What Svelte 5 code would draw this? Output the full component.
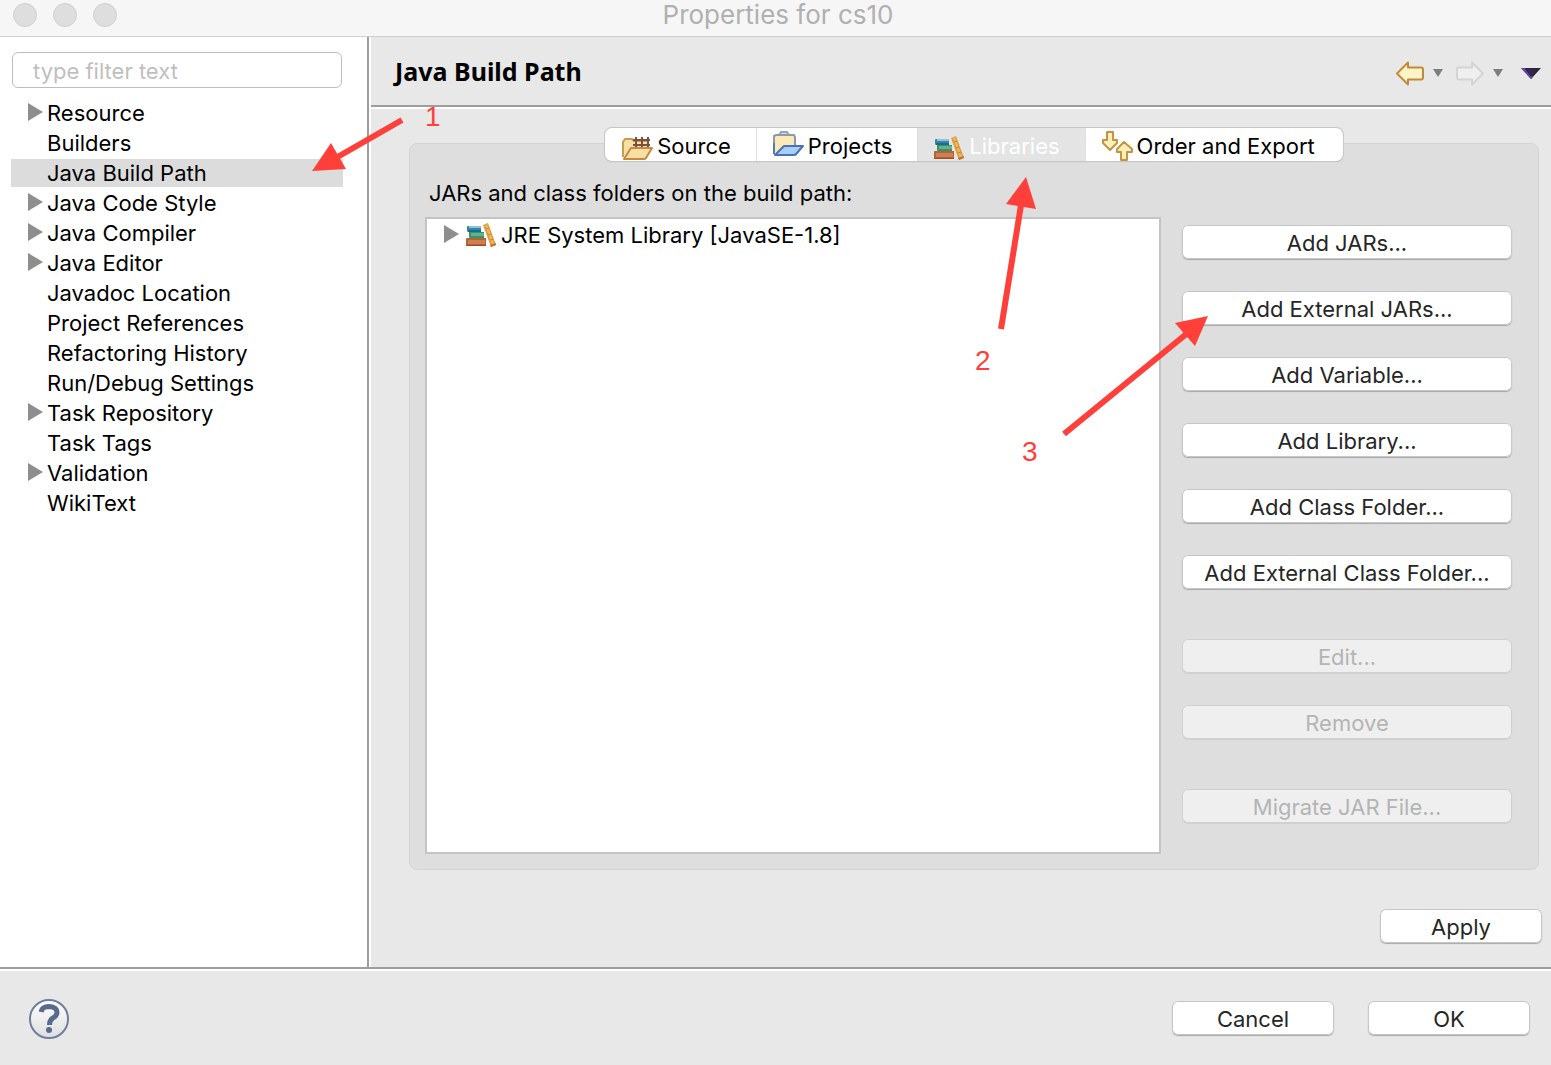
<script lang="ts">
	type Page = { name: string; parent?: boolean };

	const pages: Page[] = [
		{ name: 'Resource', parent: true },
		{ name: 'Builders' },
		{ name: 'Java Build Path' },
		{ name: 'Java Code Style', parent: true },
		{ name: 'Java Compiler', parent: true },
		{ name: 'Java Editor', parent: true },
		{ name: 'Javadoc Location' },
		{ name: 'Project References' },
		{ name: 'Refactoring History' },
		{ name: 'Run/Debug Settings' },
		{ name: 'Task Repository', parent: true },
		{ name: 'Task Tags' },
		{ name: 'Validation', parent: true },
		{ name: 'WikiText' }
	];

	const tabs = ['Source', 'Projects', 'Libraries', 'Order and Export'];

	const actionGroups = [
		{
			disabled: false,
			labels: ['Add JARs...', 'Add External JARs...', 'Add Variable...', 'Add Library...', 'Add Class Folder...', 'Add External Class Folder...']
		},
		{ disabled: true, labels: ['Edit...', 'Remove'] },
		{ disabled: true, labels: ['Migrate JAR File...'] }
	];

	let selectedPage = $state('Java Build Path');
	let activeTab = $state('Libraries');
	let filter = $state('');
</script>

{#snippet disclosure()}
	<svg class="disclosure" width="15" height="18" viewBox="0 0 15 18" aria-hidden="true"><path d="M0 0L15 9L0 18Z" fill="#8e8e8e" /></svg>
{/snippet}

{#snippet books()}
	<svg width="31" height="26" viewBox="0 0 31 26" aria-hidden="true">
		<path d="M1 5q0-1 1-1h13v6H2q-1 0-1-2z" fill="#3484ab" />
		<path d="M3 4h12v2H3z" fill="#8cc6dd" />
		<path d="M2 8h13v2H2z" fill="#24668c" />
		<path d="M3 10h15v6H4q-1 0-1-1z" fill="#37946a" />
		<path d="M5 11h13v3H5z" fill="#62b488" />
		<path d="M0 17q0-1 1-1h19v8H0z" fill="#b5623a" />
		<path d="M2 18h17v4H2z" fill="#cf7f50" />
		<path d="M0 23h20v1H0z" fill="#96502f" />
		<path d="M17 3l5-2l8 22l-5 2z" fill="#dc9c3e" />
		<path d="M19 3l2-1l7 20l-2 1z" fill="#efb755" />
		<path d="M20 7l3-1M22 13l3-1M24 18l3-1" stroke="#c9862f" />
		<path d="M24 23l6-2v2l-5 2z" fill="#bf6e3c" />
	</svg>
{/snippet}

{#snippet arrowShape()}
	<path d="M2 12.500L13 1.500v5h13q2 0 2 2v8q0 2-2 2H13v5Z" stroke-linejoin="round" stroke-width="2" />
{/snippet}

{#snippet tabIcon(name: string)}
	{#if name === 'Source'}
		<svg width="31" height="26" viewBox="0 0 31 26" aria-hidden="true">
			<path d="M1 22V7l2-3h7l2 2h14v8" fill="#f7dfa6" stroke="#cc9a52" stroke-width="2" stroke-linejoin="round" />
			<path d="M14 2v11M20 2v11M26 2v11M11 5h17M11 10h17" stroke="#7a5044" stroke-width="2" fill="none" />
			<path d="M2 24L9 13h21l-6 10q-1 1-2 1Z" fill="#fae0a0" stroke="#c38a42" stroke-width="2" stroke-linejoin="round" />
		</svg>
	{:else if name === 'Projects'}
		<svg width="31" height="30" viewBox="0 0 31 30" aria-hidden="true">
			<path d="M6 4L8 1h6l2 3" fill="#cfdbe6" stroke="#98a5b2" stroke-width="2" />
			<path d="M1 22V5l2-1h18l1 2v9" fill="#fbeab8" stroke="#8c99a8" stroke-width="2" stroke-linejoin="round" />
			<path d="M2 24L11 15h19l-6 7q-1 2-3 2Z" fill="#a6cffa" stroke="#4a70b8" stroke-width="2" stroke-linejoin="round" />
			<path d="M1 12v11" stroke="#5579bb" stroke-width="2" />
		</svg>
	{:else if name === 'Libraries'}
		{@render books()}
	{:else}
		<svg width="31" height="31" viewBox="0 0 31 31" aria-hidden="true">
			<g fill="#fbefb9" stroke="#c49442" stroke-width="2" stroke-linejoin="round">
				<path d="M5 2h6v8h4v3l-7 7l-7-7v-3h4Z" />
				<path d="M19 30h6v-8h5v-3l-8-7l-7 7v3h4Z" />
			</g>
		</svg>
	{/if}
{/snippet}

<div class="window">
	<header class="titlebar">
		<div class="lights"><span></span><span></span><span></span></div>
		<div class="title">Properties for cs10</div>
	</header>

	<div class="body">
		<nav class="sidebar">
			<input type="text" class="filter" aria-label="type filter text" placeholder="type filter text" bind:value={filter} />
			<ul>
				{#each pages as page}
					<li>
						<button type="button" class="page" class:selected={page.name === selectedPage} onclick={() => (selectedPage = page.name)}>
							<span class="twisty">{#if page.parent}{@render disclosure()}{/if}</span>
							{page.name}
						</button>
					</li>
				{/each}
			</ul>
		</nav>

		<main>
			<div class="page-header">
				<h1>Java Build Path</h1>
				<div class="history">
					<button type="button" aria-label="Back">
						<svg width="30" height="25" viewBox="0 0 30 25"><g fill="#fff3c8" stroke="#c1893b">{@render arrowShape()}</g></svg>
					</button>
					<button type="button" aria-label="Back history">
						<svg width="10" height="8" viewBox="0 0 10 8"><path d="M0 0h10L5 8z" fill="#7d7d7d" /></svg>
					</button>
					<button type="button" class="forward" aria-label="Forward" disabled>
						<svg width="30" height="25" viewBox="0 0 30 25"><g fill="#efefef" stroke="#d4d4d4" transform="matrix(-1 0 0 1 30 0)">{@render arrowShape()}</g></svg>
					</button>
					<button type="button" aria-label="Forward history">
						<svg width="10" height="8" viewBox="0 0 10 8"><path d="M0 0h10L5 8z" fill="#7d7d7d" /></svg>
					</button>
					<button type="button" class="view-menu" aria-label="Menu">
						<svg width="20" height="11" viewBox="0 0 20 11"><path d="M0 0h20L10 11z" fill="#2c2438" /><path d="M0 0l10 11l2-2L4 0z" fill="#6a45a8" /><path d="M4 1h12l-6 8z" fill="#33264a" /></svg>
					</button>
				</div>
			</div>

			<div class="content">
				<section class="panel">
					<div class="tabs" role="tablist">
						{#each tabs as tab}
							<button type="button" role="tab" aria-selected={tab === activeTab} class:active={tab === activeTab} onclick={() => (activeTab = tab)}>
								<span class="tab-icon">{@render tabIcon(tab)}</span>
								{tab}
							</button>
						{/each}
					</div>

					<p class="caption">JARs and class folders on the build path:</p>

					<div class="columns">
						<div class="entries">
							<button type="button" class="entry">
								{@render disclosure()}
								{@render books()}
								<span>JRE System Library [JavaSE-1.8]</span>
							</button>
						</div>
						<div class="actions">
							{#each actionGroups as group}
								<div class="group">
									{#each group.labels as label}
										<button type="button" class="push" disabled={group.disabled}>{label}</button>
									{/each}
								</div>
							{/each}
						</div>
					</div>
				</section>

				<div class="apply">
					<button type="button" class="push">Apply</button>
				</div>
			</div>
		</main>
	</div>

	<footer>
		<button type="button" class="help" aria-label="Help">
			<svg width="42" height="44" viewBox="0 0 42 44">
				<defs>
					<linearGradient id="help-fill" x1="0" y1="0" x2="0" y2="1">
						<stop offset="0" stop-color="#fff" />
						<stop offset="1" stop-color="#dedede" />
					</linearGradient>
				</defs>
				<circle cx="21" cy="23" r="19" fill="url(#help-fill)" stroke="#6c7f9c" stroke-width="2" />
				<path d="M13 16Q14 10.500 21 10.500Q29 11 29 16.500Q29 20 25 22Q21.500 24 21.500 29" fill="none" stroke="#566b8e" stroke-width="5" />
				<circle cx="21" cy="34" r="3" fill="#566b8e" />
			</svg>
		</button>
		<div class="dialog-buttons">
			<button type="button" class="push">Cancel</button>
			<button type="button" class="push">OK</button>
		</div>
	</footer>

	<svg class="notes" width="1551" height="1065" viewBox="0 0 1551 1065">
		<g stroke="#ff403a" stroke-width="6">
			<path d="M402 120L334 159" />
			<path d="M1001 329L1021 205" />
			<path d="M1064 434L1190 331" />
		</g>
		<g fill="#ff403a">
			<path d="M312 171L331 143L346 169Z" />
			<path d="M1026 177L1006 204L1036 209Z" />
			<path d="M1208 316L1175 323L1195 346Z" />
			<text x="425" y="126">1</text>
			<text x="975" y="370">2</text>
			<text x="1022" y="461">3</text>
		</g>
	</svg>
</div>

<style>
	:global(body) { margin: 0; background: #e8e8e8; }

	.window {
		position: relative; display: flex; flex-direction: column; min-height: 100vh; overflow: hidden;
		font-family: Inter, "Liberation Sans", sans-serif; font-size: 22px; line-height: 28px; color: #000;
	}
	button { font: inherit; color: inherit; border: 0; padding: 0; background: none; text-align: left; }
	svg { display: block; flex: none; }

	.titlebar {
		display: grid; grid-template-columns: 1fr auto 1fr; align-items: center; box-sizing: border-box;
		height: 37px; padding: 0 8px 6px 13px; background: #f6f6f6; border-bottom: 1px solid #cfcfcf;
	}
	.lights { display: flex; gap: 16px; }
	.lights span { width: 22px; height: 22px; border: 1px solid #d0d0d0; border-radius: 50%; background: #dedede; }
	.title { font-size: 26px; color: #b0b0b0; }

	.body { display: flex; flex: 1; }
	.sidebar {
		flex: none; box-sizing: border-box; width: 369px; padding: 15px 24px 0 11px;
		background: #fff; border-right: 2px solid #9d9d9d;
	}
	.filter {
		display: block; box-sizing: border-box; width: 330px; height: 36px; margin: 0 1px 10px; padding: 2px 20px 0;
		border: 1px solid #bdbdbd; border-radius: 6px; background: #fff; font: inherit;
	}
	.filter::placeholder { color: #bfbfbf; opacity: 1; }
	ul { list-style: none; margin: 0; padding: 0; }
	li { padding: 1px 0; }
	.page { display: flex; align-items: center; width: 100%; height: 28px; }
	.page.selected { background: #dcdcdc; }
	.twisty { width: 19px; padding-left: 17px; }
	.disclosure { margin-bottom: 2px; }

	main { flex: 1; display: flex; flex-direction: column; min-width: 0; border-left: 2px solid #fff; background: #e8e8e8; }
	.page-header {
		display: flex; align-items: center; justify-content: space-between; height: 68px;
		padding: 0 10px 0 24px; border-bottom: 2px solid #9d9d9d;
	}
	h1 { margin: 0; font-family: "Noto Sans", "Open Sans", sans-serif; font-size: 25px; font-weight: 700; }
	.history { display: flex; align-items: center; gap: 8px; padding-top: 4px; }
	.forward { margin-left: 4px; }
	.view-menu { margin-left: 10px; }

	.content { flex: 1; display: flex; flex-direction: column; padding: 34px 9px 24px 38px; border-top: 2px solid #fff; }
	.panel {
		flex: 1; display: flex; flex-direction: column; box-sizing: border-box; margin-right: 3px;
		padding: 0 26px 15px 15px; border: 1px solid #d4d4d4; border-radius: 8px; background: #dedede;
	}
	.tabs {
		align-self: center; display: flex; margin: -16px -26px 0 -15px; height: 33px;
		border-radius: 7px; background: #fff; box-shadow: 0 0 0 1px #c6c6c6, 0 1px 1px #a8a8a8;
	}
	.tabs button { display: flex; align-items: center; gap: 4px; padding: 2px 25px 0 17px; }
	.tabs button + button { box-shadow: inset 1px 0 #e0e0e0; }
	.tabs button:last-child { padding-right: 28px; }
	.tabs button.active { background: #e4e4e4; color: #fff; }
	.tab-icon { display: grid; align-content: end; height: 30px; }

	.caption { margin: 18px 0 10px 4px; }
	.columns { flex: 1; display: flex; gap: 21px; }
	.entries { flex: 1; border: 2px solid #c4c4c4; background: #fff; }
	.entry { display: flex; align-items: center; gap: 4px; height: 32px; padding-left: 17px; }
	.entry .disclosure { margin-right: 3px; }
	.actions { flex: none; display: flex; flex-direction: column; gap: 50px; width: 330px; padding-top: 8px; }
	.group { display: flex; flex-direction: column; gap: 32px; }

	.push {
		height: 34px; padding-top: 2px; border-radius: 6px; background: #fff; color: #262626; text-align: center;
		box-shadow: inset 0 0 0 1px #c6c6c6, 0 1px 1px #a8a8a8;
	}
	.push:disabled { background: #efefef; color: #b4b4b4; box-shadow: inset 0 0 0 1px #d0d0d0, 0 1px 1px #cfcfcf; }
	.apply { display: flex; justify-content: flex-end; padding-top: 39px; }
	.apply .push, footer .push { width: 162px; }

	footer {
		display: flex; align-items: center; justify-content: space-between; height: 94px;
		padding: 2px 21px 0 28px; border-top: 2px solid #9d9d9d; box-shadow: inset 0 2px #fff; background: #e8e8e8;
	}
	.dialog-buttons { display: flex; gap: 34px; }

	.notes { position: absolute; top: 0; left: 0; pointer-events: none; font: 28px "Liberation Sans", sans-serif; }
</style>
